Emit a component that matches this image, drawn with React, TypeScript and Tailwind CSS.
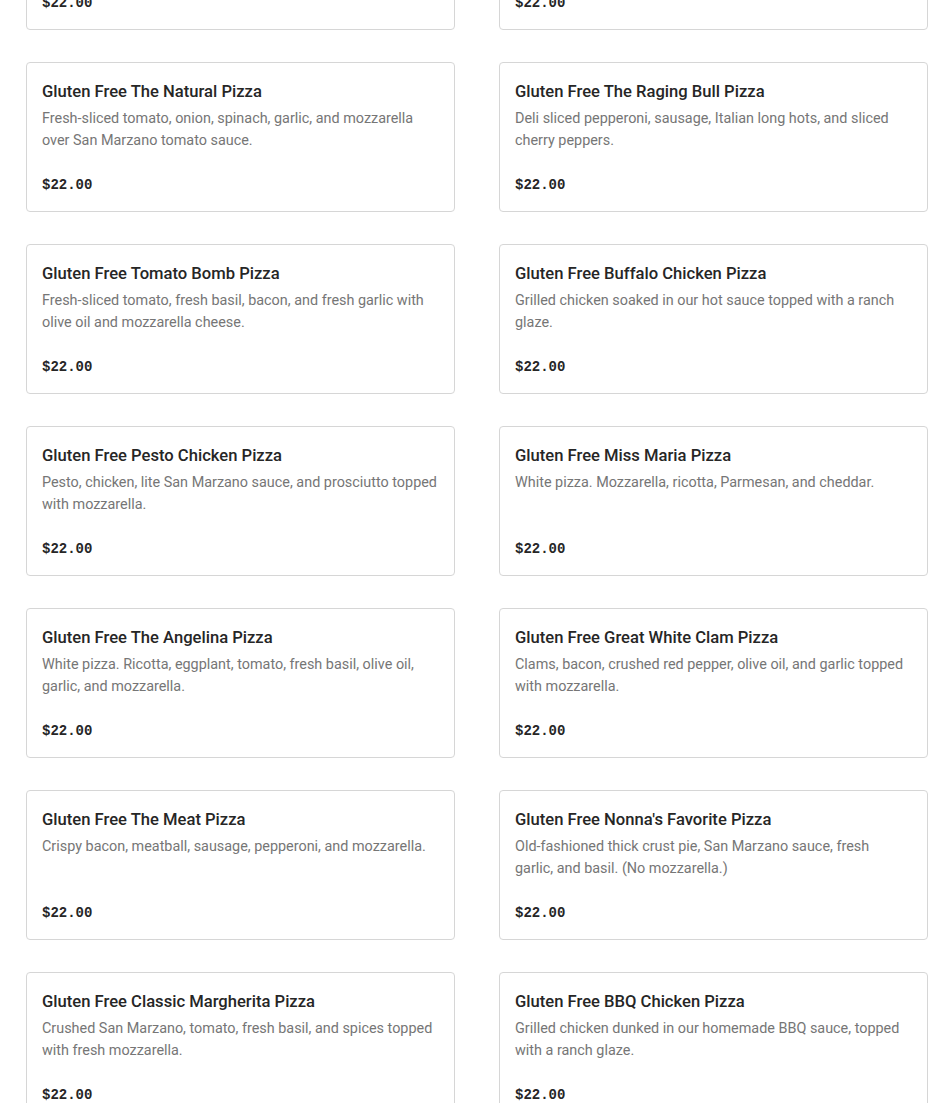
const items = [
  { name: "Gluten Free Plain Pizza", desc: "San Marzano tomato sauce and mozzarella." },
  { name: "Gluten Free White Pizza", desc: "Ricotta, mozzarella, and fresh garlic with olive oil." },
  { name: "Gluten Free The Natural Pizza", desc: "Fresh-sliced tomato, onion, spinach, garlic, and mozzarella over San Marzano tomato sauce." },
  { name: "Gluten Free The Raging Bull Pizza", desc: "Deli sliced pepperoni, sausage, Italian long hots, and sliced cherry peppers." },
  { name: "Gluten Free Tomato Bomb Pizza", desc: "Fresh-sliced tomato, fresh basil, bacon, and fresh garlic with olive oil and mozzarella cheese." },
  { name: "Gluten Free Buffalo Chicken Pizza", desc: "Grilled chicken soaked in our hot sauce topped with a ranch glaze." },
  { name: "Gluten Free Pesto Chicken Pizza", desc: "Pesto, chicken, lite San Marzano sauce, and prosciutto topped with mozzarella." },
  { name: "Gluten Free Miss Maria Pizza", desc: "White pizza. Mozzarella, ricotta, Parmesan, and cheddar." },
  { name: "Gluten Free The Angelina Pizza", desc: "White pizza. Ricotta, eggplant, tomato, fresh basil, olive oil, garlic, and mozzarella." },
  { name: "Gluten Free Great White Clam Pizza", desc: "Clams, bacon, crushed red pepper, olive oil, and garlic topped with mozzarella." },
  { name: "Gluten Free The Meat Pizza", desc: "Crispy bacon, meatball, sausage, pepperoni, and mozzarella." },
  { name: "Gluten Free Nonna's Favorite Pizza", desc: "Old-fashioned thick crust pie, San Marzano sauce, fresh\ngarlic, and basil. (No mozzarella.)" },
  { name: "Gluten Free Classic Margherita Pizza", desc: "Crushed San Marzano, tomato, fresh basil, and spices topped with fresh mozzarella." },
  { name: "Gluten Free BBQ Chicken Pizza", desc: "Grilled chicken dunked in our homemade BBQ sauce, topped with a ranch glaze." },
];

function MenuCard({ name, desc }: { name: string; desc: string }) {
  return (
    <div className="rounded border border-[#d6d6d6] bg-white pt-[17px] pr-[14px] pb-[15px] pl-[15px]">
      <h3 className="text-[16.6px] leading-6 font-medium text-[#262626]">{name}</h3>
      <p className="mt-[4px] min-h-[44px] whitespace-pre-line text-[14.4px] leading-[22px] text-[#767676]">{desc}</p>
      <div className="mt-[22px] font-['Liberation_Mono',monospace] text-[14px] leading-[22px] font-bold text-[#262626]">
        $22.00
      </div>
    </div>
  );
}

export default function App() {
  return (
    <div className="h-[1103px] overflow-hidden bg-white font-['Roboto',sans-serif]">
      <div className="mt-[-120px] grid grid-cols-[429px_429px] gap-x-[44px] gap-y-8 pl-[26px]">
        {items.map((it) => (
          <MenuCard key={it.name} {...it} />
        ))}
      </div>
    </div>
  );
}
